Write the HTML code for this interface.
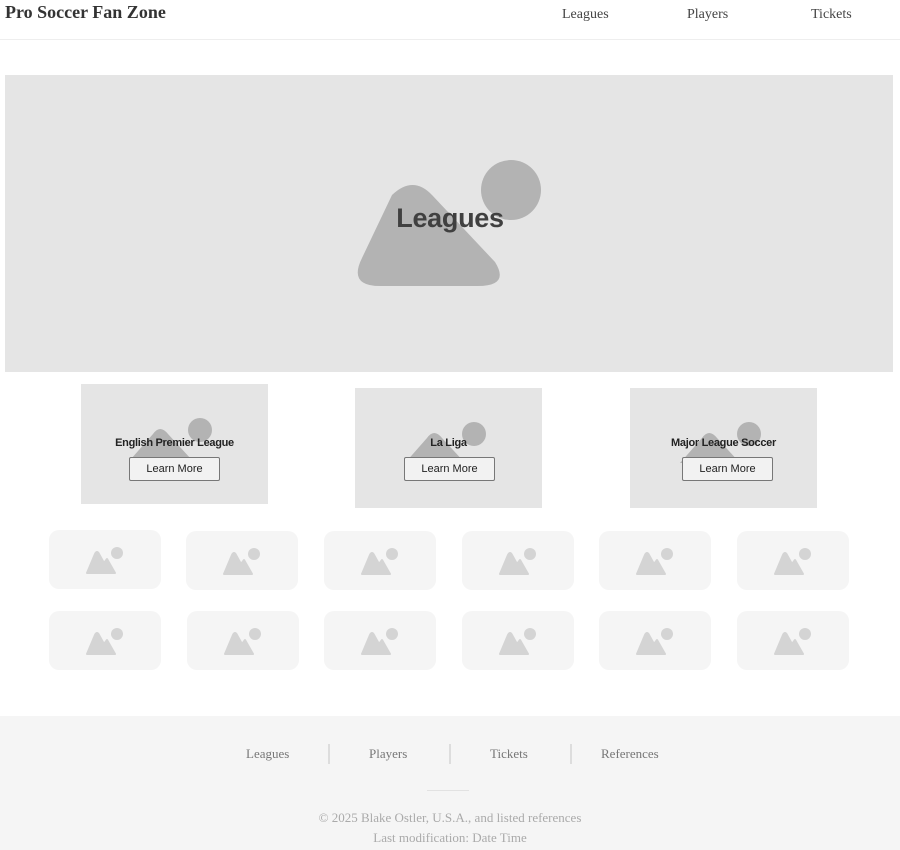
<!DOCTYPE html>
<html><head><style>
body{margin:0;width:900px;height:850px;position:relative;background:#fff;font-family:"Liberation Serif",serif;overflow:hidden}
.a{position:absolute}
.hdr{top:0;left:0;width:900px;height:39px;border-bottom:1px solid #eee}
.nav{font-size:14px;color:#444;top:7px}
.card{background:#e5e5e5;width:187px;height:120px}
.ct{font:bold 11px "Liberation Sans",sans-serif;color:#222;width:187px;text-align:center;top:52px;left:0;letter-spacing:-0.3px}
.btn{width:89px;height:22px;border:1px solid #777;border-radius:2px;background:#f2f2f2;font:11px "Liberation Sans",sans-serif;color:#222;text-align:center;line-height:22px;top:72px;left:48px}
.fl{font-size:13px;color:#777;top:746px}
.sep{width:2px;height:20px;background:#ddd;top:744px}
</style></head><body>
<div class="a hdr"></div>
<div class="a" style="left:5px;top:2px;font-size:18px;font-weight:bold;color:#333">Pro Soccer Fan Zone</div>
<div class="a nav" style="left:562px">Leagues</div>
<div class="a nav" style="left:687px">Players</div>
<div class="a nav" style="left:811px">Tickets</div>

<div class="a" style="left:5px;top:75px;width:888px;height:297px;background:#e5e5e5"></div>
<svg class="a" style="left:0;top:0" width="900" height="850">
<path d="M392 195 Q413 175 432 195 L495 262 Q510 286 478 286 L380 286 Q348 286 362 258 Z" fill="#b3b3b3"/>
<circle cx="511" cy="190" r="30" fill="#b3b3b3"/>
</svg>
<div class="a" style="left:0;width:900px;text-align:center;top:203px;font:bold 27px 'Liberation Sans',sans-serif;color:#404040;letter-spacing:-0.3px">Leagues</div>

<div class="a card" style="left:81px;top:384px">
<svg class="a" style="left:0;top:0" width="187" height="120"><path d="M72 50 Q79 40 87 50 L110 75 L50 75 Z" fill="#b3b3b3"/><circle cx="119" cy="46" r="12" fill="#b3b3b3"/></svg>
<div class="a ct" style="top:53px">English Premier League</div><div class="a btn" style="top:73px">Learn More</div></div>
<div class="a card" style="left:355px;top:388px">
<svg class="a" style="left:0;top:0" width="187" height="120"><path d="M72 50 Q79 40 87 50 L110 75 L50 75 Z" fill="#b3b3b3"/><circle cx="119" cy="46" r="12" fill="#b3b3b3"/></svg>
<div class="a ct" style="top:49px">La Liga</div><div class="a btn" style="top:69px;left:49px">Learn More</div></div>
<div class="a card" style="left:630px;top:388px">
<svg class="a" style="left:0;top:0" width="187" height="120"><path d="M72 50 Q79 40 87 50 L110 75 L50 75 Z" fill="#b3b3b3"/><circle cx="119" cy="46" r="12" fill="#b3b3b3"/></svg>
<div class="a ct" style="top:49px">Major League Soccer</div><div class="a btn" style="top:69px;left:52px">Learn More</div></div>

<svg class="a" style="left:0;top:0" width="900" height="700">
<defs><g id="ic"><rect width="112" height="59" rx="10" fill="#f5f5f5"/><path d="M38 43 L46 24 Q48 20 50 24 L55 33 L58 29 L66 43 Z" fill="#d4d4d4" stroke="#d4d4d4" stroke-width="2" stroke-linejoin="round"/><circle cx="68" cy="23" r="6" fill="#d4d4d4"/></g></defs>
<use href="#ic" x="49" y="530"/><use href="#ic" x="186" y="531"/><use href="#ic" x="324" y="531"/><use href="#ic" x="462" y="531"/><use href="#ic" x="599" y="531"/><use href="#ic" x="737" y="531"/>
<use href="#ic" x="49" y="611"/><use href="#ic" x="187" y="611"/><use href="#ic" x="324" y="611"/><use href="#ic" x="462" y="611"/><use href="#ic" x="599" y="611"/><use href="#ic" x="737" y="611"/>
</svg>

<div class="a" style="left:0;top:716px;width:900px;height:134px;background:#f5f5f5"></div>
<div class="a fl" style="left:246px">Leagues</div>
<div class="a sep" style="left:328px"></div>
<div class="a fl" style="left:369px">Players</div>
<div class="a sep" style="left:449px"></div>
<div class="a fl" style="left:490px">Tickets</div>
<div class="a sep" style="left:570px"></div>
<div class="a fl" style="left:601px">References</div>
<div class="a" style="left:427px;top:790px;width:42px;height:1px;background:#e2e2e2"></div>
<div class="a" style="left:0;width:900px;text-align:center;top:810px;font-size:13px;color:#aaa">© 2025 Blake Ostler, U.S.A., and listed references</div>
<div class="a" style="left:0;width:900px;text-align:center;top:830px;font-size:13px;color:#aaa">Last modification: Date Time</div>
</body></html>
